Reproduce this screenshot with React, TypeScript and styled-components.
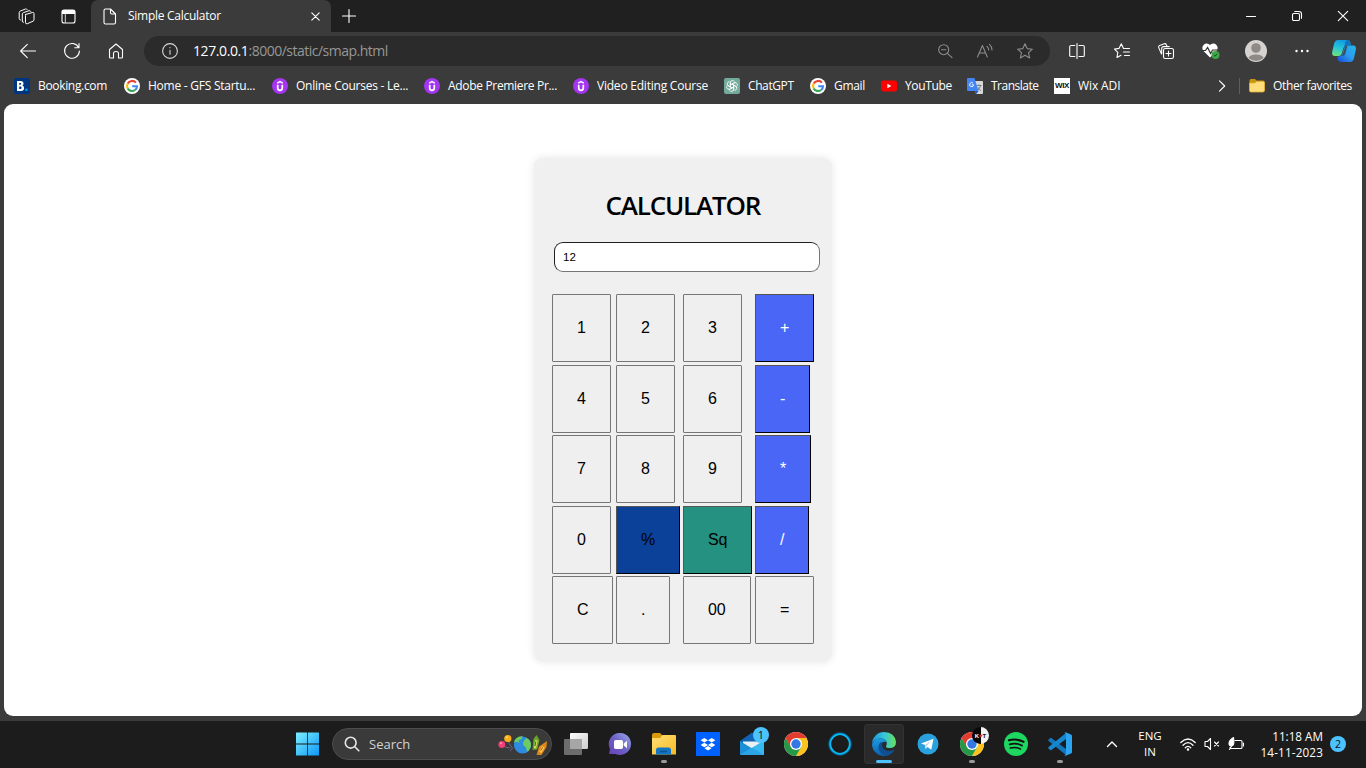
import React from "react";
import styled, { createGlobalStyle } from "styled-components";

const GlobalStyle = createGlobalStyle`
  * { box-sizing: border-box; }
  html, body { margin: 0; padding: 0; overflow: hidden; }
  body { background: #3b3b3b; font-family: "Open Sans", "Noto Sans", sans-serif; }
  svg { display: block; flex: none; overflow: visible; }
`;

const Screen = styled.div`
  width: 1366px;
  height: 768px;
  display: flex;
  flex-direction: column;
  background: #3b3b3b;
  color: #fff;
`;

const Label = styled.span<{ $size?: number; $track?: number; $color?: string }>`
  font-size: ${(p) => p.$size ?? 12}px;
  letter-spacing: ${(p) => p.$track ?? 0}px;
  color: ${(p) => p.$color ?? "#fff"};
  line-height: 16px;
  white-space: nowrap;
`;

const TitleBar = styled.header`
  height: 32px;
  display: flex;
  background: #202020;
`;

const TitleTools = styled.div`
  width: 91px;
  display: flex;
  align-items: center;
  gap: 26px;
  padding-left: 17.5px;
`;

const Tab = styled.div`
  width: 240px;
  display: flex;
  align-items: center;
  padding: 0 11px 0 12px;
  background: #3b3b3b;
  border-radius: 7px 7px 0 0;
`;

const TabTitle = styled(Label)`
  flex: 1;
  margin-left: 11px;
`;

const NewTab = styled.div`
  display: flex;
  align-items: center;
  padding-left: 10.5px;
`;

const WindowControls = styled.div`
  margin-left: auto;
  display: flex;
  align-items: center;
  gap: 36px;
  padding-right: 18px;
`;

const Toolbar = styled.div`
  height: 38px;
  display: flex;
  align-items: center;
`;

const NavButtons = styled.div`
  width: 144px;
  display: flex;
  align-items: center;
  gap: 28px;
  padding-left: 20px;
`;

const AddressBar = styled.div`
  width: 906px;
  height: 30px;
  display: flex;
  align-items: center;
  padding: 0 17px 0 18px;
  border-radius: 15px;
  background: #2b2b2b;
`;

const Url = styled.div`
  flex: 1;
  margin-left: 15px;
  display: flex;
`;

const AddressTools = styled.div`
  display: flex;
  align-items: center;
  gap: 23px;
`;

const ToolCell = styled.div<{ $w: number }>`
  width: ${(p) => p.$w}px;
  display: flex;
  justify-content: center;
`;

const Tools = styled.div`
  display: flex;
  align-items: center;
  padding-left: 5px;
`;

const BookmarkBar = styled.nav`
  height: 34px;
  display: flex;
  align-items: center;
  padding: 0 0 2px 14px;
`;

const Bookmark = styled.a<{ $w?: number }>`
  width: ${(p) => (p.$w ? `${p.$w}px` : "auto")};
  flex: none;
  display: flex;
  align-items: center;
  gap: 8px;
`;

const Divider = styled.i`
  width: 1px;
  height: 16px;
  background: #5e5e5e;
  margin: 0 9px 0 13px;
`;

const BookmarkEnd = styled.div`
  margin-left: auto;
  width: 148px;
  display: flex;
  align-items: center;
`;

const Page = styled.main`
  width: 1358px;
  height: 612px;
  margin: 0 4px 5px;
  padding-top: 53.5px;
  border-radius: 9px;
  background: #fff;
`;

const Card = styled.section`
  width: 298.5px;
  height: 504.5px;
  margin-left: 529.5px;
  display: flex;
  flex-direction: column;
  border-radius: 9px;
  background: #f0f0f0;
  box-shadow: 0 0 9px rgba(0, 0, 0, 0.1);
`;

const Heading = styled.h1`
  margin: 29.5px 0 0 72px;
  height: 37px;
  font: 600 26px/36px "Open Sans", "Noto Sans", sans-serif;
  letter-spacing: -1.2px;
  color: #000;
`;

const Display = styled.input`
  width: 266px;
  height: 30px;
  margin: 18px 0 22px 20.5px;
  padding: 0 8px;
  border: 1px solid;
  border-color: #202020 #767676 #767676 #202020;
  border-radius: 9px;
  background: #fff;
  color: #000;
  font: 11.5px/16px "Liberation Sans", Arial, sans-serif;
  outline: none;
`;

const Keypad = styled.div`
  display: grid;
  grid-template-columns: 64px 67px 72px 60px;
  grid-auto-rows: 68px;
  row-gap: 2.5px;
  justify-items: start;
  padding-left: 18.4px;
`;

type KeyTone = "plain" | "operator" | "percent" | "square";
const toneFill: Record<KeyTone, string> = {
  plain: "#efefef",
  operator: "#4a66f6",
  percent: "#0b4199",
  square: "#259180",
};

const Key = styled.button<{ $tone: KeyTone }>`
  height: 68px;
  padding: 0 24px;
  font: 16px/18px "Liberation Sans", Arial, sans-serif;
  border: 1px solid;
  border-color: ${(p) => (p.$tone === "plain" ? "#767676" : "#555 #000 #000 #555")};
  border-radius: ${(p) => (p.$tone === "plain" ? 1 : 0)}px;
  background: ${(p) => toneFill[p.$tone]};
  color: ${(p) => (p.$tone === "operator" ? "#fff" : "#000")};
`;

const Taskbar = styled.footer`
  height: 47px;
  display: flex;
  align-items: center;
  padding-bottom: 1px;
  background: #1c1c1c;
`;

const Launcher = styled.div`
  display: flex;
  align-items: center;
  padding-left: 296px;
`;

const SearchBox = styled.div`
  width: 220px;
  height: 32px;
  margin: 0 2px 0 12px;
  display: flex;
  align-items: center;
  padding: 0 3px 0 11px;
  border: 1px solid #4d4d4d;
  border-radius: 16px;
  background: #3a3a3a;
`;

const SearchLabel = styled(Label)`
  flex: 1;
  margin-left: 9px;
`;

const AppSlot = styled.div<{ $active?: boolean }>`
  position: relative;
  width: 40px;
  height: 40px;
  margin: 0 2px;
  display: flex;
  align-items: center;
  justify-content: center;
  border-radius: 4px;
  background: ${(p) => (p.$active ? "#2a2a2a" : "transparent")};
  box-shadow: ${(p) => (p.$active ? "inset 0 0 0 1px #333" : "none")};
`;

const RunMark = styled.i<{ $active?: boolean }>`
  position: absolute;
  bottom: 1px;
  left: 50%;
  transform: translateX(-50%);
  width: ${(p) => (p.$active ? 16 : 6)}px;
  height: 3px;
  border-radius: 2px;
  background: ${(p) => (p.$active ? "#4cc2ff" : "#9a9a9a")};
`;

const CountBadge = styled.span`
  position: absolute;
  top: 3px;
  right: 3px;
  width: 16px;
  height: 16px;
  border-radius: 50%;
  background: #4cc2ff;
  color: #111;
  font-size: 11px;
  line-height: 16px;
  text-align: center;
`;

const Tray = styled.div`
  margin-left: auto;
  display: flex;
  align-items: center;
`;

const Language = styled.div`
  width: 40px;
  margin-left: 13px;
  display: flex;
  flex-direction: column;
  align-items: center;
`;

const Status = styled.div`
  display: flex;
  align-items: center;
  gap: 8px;
  margin-left: 10px;
`;

const Clock = styled.div`
  width: 79px;
  display: flex;
  flex-direction: column;
  align-items: flex-end;
`;

const Notice = styled.span`
  width: 16px;
  height: 16px;
  margin: 0 20px 0 7px;
  border-radius: 50%;
  background: #4cc2ff;
  color: #111;
  font-size: 10.5px;
  line-height: 16px;
  text-align: center;
`;

const Glyph: React.FC<{ s?: number; w?: number; h?: number; c?: string; sw?: number; children: React.ReactNode }> = ({
  s = 16, w, h, c = "#fff", sw = 1.1, children,
}) => (
  <svg width={w ?? s} height={h ?? s} viewBox={`0 0 ${w ?? s} ${h ?? s}`} fill="none" stroke={c} strokeWidth={sw}
    strokeLinecap="round" strokeLinejoin="round">{children}</svg>
);

const WorkspacesIcon = () => (
  <Glyph w={17} h={17} sw={1}>
    <path d="m7.500 6.500 7-2q1.500-.3 1.500 1v6.300q0 1-1 1.400l-5.600 2.500q-1.900.6-1.900-1.200V7.500q0-.7 0-1" />
    <path d="M5.500 14.300q-1.200 0-1.200-1.200V6q0-1 1-1.300l5.700-2q1.200-.3 1.700.7" />
    <path d="M2.500 12q-1.300-.2-1.300-1.300V4.500q0-1 1-1.400L7.500 1q1.200-.4 1.700.5" />
  </Glyph>
);

const PanelIcon = () => (
  <Glyph w={15} h={15}>
    <rect x="1" y="1" width="13" height="13" rx="2" />
    <path d="M1.500 1.500h12v3h-12z" fill="#fff" />
    <path d="M4.300 5v8.500" strokeWidth=".8" />
  </Glyph>
);

const DocIcon = () => (
  <Glyph w={14} h={17}>
    <path d="M2.500 1h5l5 5v8.500q0 1.500-1.500 1.500H2.500Q1 16 1 14.500v-12Q1 1 2.500 1M7.500 1v3.800q0 1.200 1.200 1.200h3.800" />
  </Glyph>
);

const BookingIcon = () => (
  <svg width="16" height="16" viewBox="0 0 16 16">
    <rect width="16" height="16" rx="2" fill="#003580" />
    <path fillRule="evenodd" d="M3 3h3.800q2.700 0 2.700 2.500 0 1.400-1 2 1.600.6 1.600 2.500 0 3-3.100 3H3zM5.200 4.900v1.800h1q1 0 1-.9t-1-.9zM5.200 8.500v2.600h1.300q1.100 0 1.100-1.300T6.500 8.500z" fill="#fff" />
    <circle cx="12.400" cy="11.800" r="1.300" fill="#00a3e8" />
  </svg>
);

const GoogleIcon = () => (
  <svg width="16" height="16" viewBox="0 0 16 16" fill="none" strokeWidth="2.100">
    <circle cx="8" cy="8" r="8" fill="#fff" />
    <path d="M11.900 4.600A5 5 0 0 0 3.700 5.600" stroke="#ea4335" />
    <path d="M3.700 5.600a5 5 0 0 0 0 4.800" stroke="#fbbc05" />
    <path d="M3.700 10.400a5 5 0 0 0 7.400 1.600" stroke="#34a853" />
    <path d="M11.100 12A5 5 0 0 0 13 8.200H8.200" stroke="#4285f4" />
  </svg>
);

const UdemyIcon = () => (
  <svg width="16" height="16" viewBox="0 0 16 16" fill="none" stroke="#fff" strokeWidth="1.700">
    <circle cx="8" cy="8" r="8" fill="#a435f0" stroke="none" />
    <path d="M5.700 6.800v3.300q0 2.300 2.300 2.300t2.300-2.300V6.800" />
    <path d="M5.200 5.200 8 3.600l2.800 1.600" strokeWidth="1.400" />
  </svg>
);

const ChatIcon = () => (
  <svg width="16" height="16" viewBox="0 0 16 16" fill="none" stroke="#fff" strokeWidth=".75">
    <rect width="16" height="16" rx="2" fill="#74aa9c" stroke="none" />
    {[0, 60, 120, 180, 240, 300].map((a) => (
      <path key={a} transform={`rotate(${a} 8 8)`} d="M6.300 9V4.700a2.300 2.300 0 0 1 4.200-1.200M6.300 7 9.900 4.900a2.300 2.300 0 0 1 2 0" />
    ))}
  </svg>
);

const YouTubeIcon = () => (
  <svg width="16" height="16" viewBox="0 0 16 16">
    <rect y="2.500" width="16" height="11" rx="2.500" fill="#f00" />
    <path d="M6.400 5.700v4.600l4-2.300z" fill="#fff" />
  </svg>
);

const TranslateIcon = () => (
  <svg width="16" height="16" viewBox="0 0 16 16" fill="none">
    <path d="M6 3h9q1 0 1 1v11q0 1-1 1H9z" fill="#d8d8d8" />
    <path d="M9.500 7.500h5M12 6.300v1.200M13.700 7.500q-1 3.500-3.500 5M10.500 9q1.500 2.800 3.500 3.700" stroke="#687a8c" strokeWidth=".9" />
    <path d="M1 0h6.500l4 13H1q-1 0-1-1V1q0-1 1-1" fill="#4285f4" />
    <path d="m7.800 13 1.500 3 2.200-3z" fill="#2457bd" />
    <path d="M6 5.200a2 2 0 1 0 .6 1.600H4.700" stroke="#fff" strokeWidth=".9" />
  </svg>
);

const WixTile = styled.span`
  width: 16px;
  height: 16px;
  background: #fff;
  color: #111;
  font: 700 8px/16px "Liberation Sans", Arial, sans-serif;
  letter-spacing: -0.3px;
  text-align: center;
`;

const FolderIcon = () => (
  <svg width="16" height="16" viewBox="0 0 16 16">
    <path d="M.5 2.500q0-1.500 1.500-1.500h4l1.500 1.500H14q1.500 0 1.500 1.500v9H.5z" fill="#c8950f" />
    <path d="M.5 5h5.300l2-1.500H14q1.500 0 1.500 1v7.500q0 2-1.500 2H2q-1.500 0-1.500-1.500z" fill="#ffdc7c" stroke="#e0b030" strokeWidth=".8" />
  </svg>
);

const HeartIcon = () => (
  <svg width="18" height="16" viewBox="0 0 18 16" fill="none">
    <path d="M8 14.500 1.500 8A4 4 0 0 1 8 2a4 4 0 0 1 6.500 6z" fill="#fff" />
    <path d="M0 7.500h3.500L5.600 4.500l3 6 2-3.500H16" stroke="#333" strokeWidth="1.200" />
    <circle cx="13.500" cy="12" r="4" fill="#3fa648" />
    <path d="m11.700 12 1.300 1.300 2.400-2.600" stroke="#174c1b" />
  </svg>
);

const AvatarIcon = () => (
  <svg width="22" height="22" viewBox="0 0 22 22">
    <circle cx="11" cy="11" r="11" fill="#d5d2cf" />
    <circle cx="11" cy="8" r="4.800" fill="#8f8a86" />
    <path d="M3.500 18q1-3.500 7.500-3.500t7.500 3.500A11 11 0 0 1 3.500 18" fill="#8f8a86" />
  </svg>
);

const CopilotIcon = () => (
  <svg width="24" height="22" viewBox="0 0 24 22">
    <defs>
      <linearGradient id="cpA" x1=".5" y1="0" x2=".2" y2="1"><stop stopColor="#0f9be0" /><stop offset=".5" stopColor="#26c6d8" /><stop offset="1" stopColor="#6ee37b" /></linearGradient>
      <linearGradient id="cpB" x1="1" y1="0" x2="0" y2="1"><stop stopColor="#25b8e8" /><stop offset=".5" stopColor="#2b9bf0" /><stop offset="1" stopColor="#1747d8" /></linearGradient>
    </defs>
    <path d="M6 0h9q3 0 3.500 3l.5 2.500h-4.500q-2.500 0-3.200 2.700l-1.500 5.300q-.8 2.500-3.300 2.500H3q-3.500 0-2.800-4L2 4Q3 0 6 0" fill="url(#cpA)" />
    <path d="M18 22H9q-3 0-3.300-3L5.300 16.500q4.200.5 5-2.200l1.700-6q.7-2.800 3.700-2.800H21q3.500 0 2.900 4L22 18q-1 4-4 4" fill="url(#cpB)" />
    <path d="M14.500 0q2.500 0 3.500 3l.9 2.500h-4q-2 0-3 2.700L13 3z" fill="#1161b9" opacity=".75" />
    <path d="M13 7.300q.8-1.800 2.500-1.800l-2.200 8q-.8 2.500-3 2.500z" fill="#3b3b3b" opacity=".8" />
  </svg>
);

const WindowsIcon = () => (
  <svg width="24" height="24" viewBox="0 0 24 24">
    <defs><linearGradient id="win" gradientUnits="userSpaceOnUse" x1="0" y1="0" x2="24" y2="24"><stop stopColor="#7df1ff" /><stop offset="1" stopColor="#0a93f5" /></linearGradient></defs>
    <path d="M0 1q0-.5.5-.5h10.700v11H0zM12 .5h10.500q.5 0 .5.500v10.500H12zM0 12.500h11.200v11H.5q-.5 0-.5-.5zM12 12.500h11V23q0 .5-.5.5H12z" fill="url(#win)" />
  </svg>
);

const SearchArt = () => (
  <svg width="50" height="24" viewBox="0 0 50 24" fill="none">
    <path d="M4 13q4 3 8 3M11 8q-1 4 2 6t-1 5" stroke="#77618e" />
    <circle cx="3.800" cy="12.500" r="3.400" fill="#f23d78" /><circle cx="3" cy="11.300" r="1" fill="#ff93b0" />
    <circle cx="9.800" cy="6.500" r="3.600" fill="#fbae18" /><circle cx="9" cy="5.200" r="1" fill="#ffdb72" />
    <circle cx="24.500" cy="13" r="8.600" fill="#2d8ce0" />
    <path d="M18 6.500q3-2.800 6.500-2.200l-1 3-3 1 1 2.500-3-1-2.500 1q0-2.500 2-4.300M25 10.500l3-4.500 3 1.500q2.500 3 2 7l-2.500 4.500-1.500.5-1-4-2.500-2z" fill="#6dcc5d" />
    <path d="m34.500 18 1-11L38.500 3l3 5-2.300 9.500z" fill="#69a52c" /><path d="m36 16 1.200-8 2.500.5-1.700 8z" fill="#d5dc59" /><path d="m37 14 .8-4.500" stroke="#37702a" />
    <path d="m38.500 23 2.500-8.500L49 9l-.5 6-5 8z" fill="#db8617" /><path d="m41 19.500 3-5.500 2.700 1.600-3.500 5.600z" fill="#ffc44e" /><path d="m42.500 18.700 2.300-3.500" stroke="#a75b0a" />
  </svg>
);

const TaskViewIcon = () => (
  <svg width="24" height="24" viewBox="0 0 24 24">
    <defs><linearGradient id="tv" x1="0" y1="0" x2="1" y2="1"><stop stopColor="#fff" /><stop offset="1" stopColor="#ccc" /></linearGradient></defs>
    <rect x="6" y="1" width="18" height="16" rx="1" fill="url(#tv)" />
    <rect x="0" y="7" width="18" height="16" rx="1" fill="#6d6d6d" />
    <path d="M6 7h12v10H6z" fill="#a6a6a6" />
  </svg>
);

const MeetIcon = () => (
  <svg width="24" height="24" viewBox="0 0 24 24">
    <defs><linearGradient id="meet" x1="0" y1="1" x2="1" y2="0"><stop stopColor="#693fb5" /><stop offset=".5" stopColor="#6c62c8" /><stop offset="1" stopColor="#9caeea" /></linearGradient></defs>
    <path d="M12.500 1a11 11 0 1 1-5 21H1l1-5A11 11 0 0 1 12.500 1" fill="url(#meet)" />
    <rect x="6" y="8" width="9" height="9" rx="1.700" fill="#fff" /><path d="m15.700 11.500 3.300-2.700v7.500l-3.300-2.700z" fill="#fff" />
  </svg>
);

const ExplorerIcon = () => (
  <svg width="24" height="22" viewBox="0 0 24 22">
    <defs><linearGradient id="fx" x1="0" y1="0" x2="1" y2="1"><stop stopColor="#ffe078" /><stop offset="1" stopColor="#f8b923" /></linearGradient></defs>
    <path d="M0 2q0-2 2-2h6l2 2v5H0z" fill="#d99b08" />
    <path d="M0 5h8l2.500-3H23q1 0 1 1v18.500H0z" fill="url(#fx)" />
    <path d="M4 21.500V17q0-2.500 2.500-2.500h10q2.500 0 2.500 2.500v4.500z" fill="#1276c4" /><path d="M8 18.500h7" stroke="#0b5491" strokeWidth="1.500" />
  </svg>
);

const DropboxIcon = () => (
  <svg width="24" height="24" viewBox="0 0 24 24">
    <rect width="24" height="24" fill="#0061fe" />
    <path d="m8.300 6 3.700 2.300-3.700 2.300-3.700-2.300zM15.700 6l3.700 2.300-3.700 2.300L12 8.300zM8.300 10.700l3.700 2.300-3.700 2.300L4.600 13zM15.700 10.700l3.700 2.300-3.700 2.300L12 13zM12 14l3.600 2.300-3.600 2.300-3.600-2.300z" fill="#fff" />
  </svg>
);

const MailIcon = () => (
  <svg width="24" height="24" viewBox="0 0 24 24">
    <path d="m0 9 12-8.500L24 9v6H0z" fill="#1064b5" />
    <path d="M3 9.500h18V15l-9 3-9-3z" fill="#e9f0f6" />
    <path d="M0 9l13 8L0 23z" fill="#1b8fd8" /><path d="M24 8.500V23H0z" fill="#36b9f0" /><path d="M24 23H0l12-7.300z" fill="#2ba5e6" />
  </svg>
);

const ChromeIcon = () => (
  <svg width="24" height="24" viewBox="0 0 24 24">
    <circle cx="12" cy="12" r="12" fill="#fff" />
    <path d="M22.400 6A12 12 0 0 1 12 24l5.200-9L12 6z" fill="#fcc31e" />
    <path d="M1.600 6A12 12 0 0 0 12 24l5.200-9h-10z" fill="#279847" />
    <path d="M1.600 6 6.800 15 12 12 12 6h10.400A12 12 0 0 0 1.600 6" fill="#e33b2e" />
    <circle cx="12" cy="12" r="6" fill="#fff" /><circle cx="12" cy="12" r="4.700" fill="#3478e5" />
  </svg>
);

const CortanaIcon = () => (
  <svg width="24" height="24" viewBox="0 0 24 24" fill="none">
    <circle cx="12" cy="12" r="10.500" stroke="#07567c" strokeWidth="2.500" /><circle cx="12" cy="12" r="9.800" stroke="#09baf5" strokeWidth="1.800" />
  </svg>
);

const EdgeIcon = () => (
  <svg width="24" height="24" viewBox="0 0 24 24">
    <defs>
      <linearGradient id="egA" x1="0" y1=".4" x2="1" y2=".4"><stop stopColor="#1b96d8" /><stop offset=".5" stopColor="#33c5dd" /><stop offset="1" stopColor="#68e15a" /></linearGradient>
      <linearGradient id="egB" x1="0" y1="0" x2="0" y2="1"><stop stopColor="#1b9de2" /><stop offset="1" stopColor="#0c5eae" /></linearGradient>
    </defs>
    <path d="M0 11A12 12 0 0 1 12 0q11 .5 12 10 0 6-6.500 6-4 0-3.500-2 1-1.500.8-3.500Q13.500 6.500 9 6.500q-6 0-9 4.500" fill="url(#egA)" />
    <path d="M0 12Q2 6.500 8.500 6.500q5 0 6.300 4-1.800-1.300-4-.3Q8 12 8.500 15.500q.8 4.500 6 6.300 1 .3 3-.2Q15.500 24 12 24A12 12 0 0 1 0 12" fill="url(#egB)" />
    <path d="M8.500 10.500q-3 3-1.500 7.500 1.700 4.500 6.500 5.800 5.500-.3 9-5.600.3-.7-.5-.4-5 2.400-8.700.2-4.500-2.800-2.500-7.500-1.500-.5-2.300 0" fill="#104f91" />
  </svg>
);

const TelegramIcon = () => (
  <svg width="22" height="22" viewBox="0 0 22 22">
    <circle cx="11" cy="11" r="10.500" fill="#2aa1dc" />
    <path d="m4 10.500 12.500-4.800-2.200 11-3.800-2.600-2 2-.5-4.200z" fill="#fff" /><path d="m8 12 6.500-4.500-4.800 5.500-.8 2.500z" fill="#b7d8ea" />
  </svg>
);

const ProfileMark = styled.span`
  position: absolute;
  top: 3px;
  left: 20px;
  width: 17px;
  height: 17px;
  display: flex;
  align-items: center;
  justify-content: center;
  border-radius: 50%;
  background: linear-gradient(90deg, #080808 50%, #f3f3f3 50%);
  font: 700 6px/8px "Liberation Sans", Arial, sans-serif;
`;

const MarkLetter = styled.b<{ $c: string }>`
  color: ${(p) => p.$c};
`;

const SpotifyIcon = () => (
  <svg width="24" height="24" viewBox="0 0 24 24" fill="none" stroke="#111" strokeLinecap="round">
    <circle cx="12" cy="12" r="12" fill="#1ed760" stroke="none" />
    <path d="M5 8.300q7.500-2.200 14.500 1.500" strokeWidth="2.200" /><path d="M5.700 12.300q6.500-1.900 12.300 1.300" strokeWidth="1.800" /><path d="M6.300 16q5.500-1.500 10.200 1.100" strokeWidth="1.500" />
  </svg>
);

const CodeIcon = () => (
  <svg width="24" height="24" viewBox="0 0 24 24">
    <path d="M.5 7.500 2.200 6q.6-.4 1.200 0L18 17v6L.6 9q-.8-.8-.1-1.500" fill="#1277bd" />
    <path d="m.5 16.500 1.700 1.500q.6.400 1.200 0L18 7V1L.6 15q-.8.800-.1 1.500" fill="#1687cf" />
    <path d="M17.500.2 23 2.500q1 .5 1 1.500v16q0 1-1 1.500l-5.500 2.300q-.8 0-1-.3L18 22V2L16.500.5z" fill="#29a5f2" />
  </svg>
);

const bookmarks: { icon: React.ReactNode; text: string; w: number; track: number }[] = [
  { icon: <BookingIcon />, text: "Booking.com", w: 110, track: -0.33 },
  { icon: <GoogleIcon />, text: "Home - GFS Startu...", w: 148, track: -0.25 },
  { icon: <UdemyIcon />, text: "Online Courses - Le...", w: 152, track: -0.25 },
  { icon: <UdemyIcon />, text: "Adobe Premiere Pr...", w: 149, track: -0.32 },
  { icon: <UdemyIcon />, text: "Video Editing Course", w: 151, track: -0.22 },
  { icon: <ChatIcon />, text: "ChatGPT", w: 86, track: -0.4 },
  { icon: <GoogleIcon />, text: "Gmail", w: 71, track: -0.3 },
  { icon: <YouTubeIcon />, text: "YouTube", w: 86, track: -0.35 },
  { icon: <TranslateIcon />, text: "Translate", w: 87, track: -0.5 },
  { icon: <WixTile>WIX</WixTile>, text: "Wix ADI", w: 80, track: -0.1 },
];

const keys: [string, KeyTone][] = [
  ["1", "plain"], ["2", "plain"], ["3", "plain"], ["+", "operator"],
  ["4", "plain"], ["5", "plain"], ["6", "plain"], ["-", "operator"],
  ["7", "plain"], ["8", "plain"], ["9", "plain"], ["*", "operator"],
  ["0", "plain"], ["%", "percent"], ["Sq", "square"], ["/", "operator"],
  ["C", "plain"], [".", "plain"], ["00", "plain"], ["=", "plain"],
];

const apps: { icon: React.ReactNode; active?: boolean; running?: boolean; extra?: React.ReactNode }[] = [
  { icon: <TaskViewIcon /> },
  { icon: <MeetIcon /> },
  { icon: <ExplorerIcon />, running: true },
  { icon: <DropboxIcon /> },
  { icon: <MailIcon />, extra: <CountBadge>1</CountBadge> },
  { icon: <ChromeIcon /> },
  { icon: <CortanaIcon /> },
  { icon: <EdgeIcon />, active: true, running: true },
  { icon: <TelegramIcon /> },
  {
    icon: <ChromeIcon />, running: true,
    extra: <ProfileMark><MarkLetter $c="#fff">K</MarkLetter><MarkLetter $c="#e22">♥</MarkLetter><MarkLetter $c="#111">T</MarkLetter></ProfileMark>,
  },
  { icon: <SpotifyIcon /> },
  { icon: <CodeIcon />, running: true },
];

export default function App() {
  return (
    <Screen>
      <GlobalStyle />
      <TitleBar>
        <TitleTools><WorkspacesIcon /><PanelIcon /></TitleTools>
        <Tab>
          <DocIcon />
          <TabTitle $track={-0.27}>Simple Calculator</TabTitle>
          <Glyph s={9}><path d="m.8.8 7.400 7.400m0-7.400L.8 8.200" /></Glyph>
        </Tab>
        <NewTab><Glyph s={14}><path d="M7 .5v13M.5 7h13" /></Glyph></NewTab>
        <WindowControls>
          <Glyph s={10}><path d="M.5 5.500h9" /></Glyph>
          <Glyph s={10}><rect x=".5" y="2.500" width="7" height="7" rx="1.200" /><path d="M2.700.5H7Q9.500.5 9.500 3v4.300" /></Glyph>
          <Glyph s={10}><path d="m.3.3 9.400 9.400m0-9.400L.3 9.700" /></Glyph>
        </WindowControls>
      </TitleBar>

      <Toolbar>
        <NavButtons>
          <Glyph><path d="M15.500 8H.8M7.300 1.300.6 8l6.700 6.700" /></Glyph>
          <Glyph><path d="M14.600 4.500A7.400 7.400 0 1 0 15.400 8M15 .6v4.200h-4.200" /></Glyph>
          <Glyph><path d="M1.500 6.500 8 1l6.500 5.500V14q0 1-1 1h-3V10.500Q10.500 8.500 8 8.500t-2.500 2V15h-3q-1 0-1-1z" /></Glyph>
        </NavButtons>
        <AddressBar>
          <Glyph c="#d8d8d8"><circle cx="8" cy="8" r="7.400" /><path d="M8 7.300v4M8 4.600v.2" /></Glyph>
          <Url>
            <Label $size={14} $track={-0.4}>127.0.0.1</Label>
            <Label $size={14} $track={-0.5} $color="#979797">:8000/static/smap.html</Label>
          </Url>
          <AddressTools>
            <Glyph c="#8c8c8c"><circle cx="6.700" cy="6.700" r="5" /><path d="m10.400 10.400 4.600 4.300M4.500 6.700h4.400" /></Glyph>
            <Glyph w={18} h={16} c="#8c8c8c"><path d="M1.500 14 6.400 2.500 11.300 14M3.200 10h6.400M11 3.300q1.700 1.400 1.700 3.700M13.500 1.300q2.500 2.200 2.500 5.700" /></Glyph>
            <Glyph c="#8c8c8c"><path d="m8 .8 2.200 4.800 5.200.6-3.900 3.500 1.100 5.200L8 12.300l-4.600 2.600 1.100-5.200L.6 6.200l5.200-.6z" /></Glyph>
          </AddressTools>
        </AddressBar>
        <Tools>
          <ToolCell $w={44}><Glyph><path d="M5.800 2.500H2Q.7 2.500.7 3.800v8.400q0 1.300 1.300 1.300h3.800M10 2.500h4q1.300 0 1.300 1.300v8.400q0 1.300-1.300 1.300h-4M8 .5v15" /></Glyph></ToolCell>
          <ToolCell $w={45}><Glyph><path d="M9.500 5.500 7.300.8 5 5.400l-4.500.7 3.300 3.200L3 14.500l4-2.200M10.500 5.500h5M9.500 9h6M10.500 12.500h5" /></Glyph></ToolCell>
          <ToolCell $w={44}><Glyph><rect x="5.500" y="5.500" width="10" height="10" rx="1.800" /><path d="M10.500 8v5M8 10.500h5M3.500 11 .7 4.600Q.2 3.300 1.500 2.600L6.300.7q1.500-.4 2 1L9 3.300M3.700 10.500V5.600q0-2 2-2h5.600" /></Glyph></ToolCell>
          <ToolCell $w={45}><HeartIcon /></ToolCell>
          <ToolCell $w={45}><AvatarIcon /></ToolCell>
          <ToolCell $w={47}><svg width="14" height="4" viewBox="0 0 14 4" fill="#fff"><circle cx="1.500" cy="2" r="1.200" /><circle cx="7" cy="2" r="1.200" /><circle cx="12.500" cy="2" r="1.200" /></svg></ToolCell>
          <ToolCell $w={38}><CopilotIcon /></ToolCell>
        </Tools>
      </Toolbar>

      <BookmarkBar>
        {bookmarks.map((b) => (
          <Bookmark key={b.text} $w={b.w}>{b.icon}<Label $track={b.track}>{b.text}</Label></Bookmark>
        ))}
        <BookmarkEnd>
          <Glyph w={8} h={12}><path d="M1.500.8 6.700 6l-5.200 5.200" /></Glyph>
          <Divider />
          <Bookmark><FolderIcon /><Label $track={-0.36}>Other favorites</Label></Bookmark>
        </BookmarkEnd>
      </BookmarkBar>

      <Page>
        <Card>
          <Heading>CALCULATOR</Heading>
          <Display type="text" defaultValue="12" />
          <Keypad>
            {keys.map(([text, tone]) => <Key key={text} $tone={tone}>{text}</Key>)}
          </Keypad>
        </Card>
      </Page>

      <Taskbar>
        <Launcher>
          <WindowsIcon />
          <SearchBox>
            <Glyph c="#e8e8e8" sw={1.600}><circle cx="6.700" cy="6.700" r="5.400" /><path d="m10.800 10.800 4 4" /></Glyph>
            <SearchLabel $size={13} $color="#d2d2d2">Search</SearchLabel>
            <SearchArt />
          </SearchBox>
          {apps.map((a, i) => (
            <AppSlot key={i} $active={a.active}>
              {a.icon}{a.extra}{a.running && <RunMark $active={a.active} />}
            </AppSlot>
          ))}
        </Launcher>
        <Tray>
          <Glyph w={10} h={6} sw={1.400}><path d="M.5 5.500 5 1l4.500 4.500" /></Glyph>
          <Language><Label $size={11.500}>ENG</Label><Label $size={11.500}>IN</Label></Language>
          <Status>
            <Glyph w={16} h={13} sw={1.300}><path d="M.8 4.500q7.200-7 14.400 0M3 7.200q5-5 10 0M5.300 9.700q2.700-2.600 5.400 0" /><circle cx="8" cy="11.500" r=".6" fill="#fff" /></Glyph>
            <Glyph w={16} h={14}><path d="M6.500 1.500v11L3.500 9.500H1v-5h2.500zM10.500 5l4 4m0-4-4 4" /></Glyph>
            <Glyph w={16} h={14}><path d="M7 3.500h6q1 0 1 1v6q0 1-1 1H3q-1 0-1-1M15.500 6v3M1.500 12.500 3.500 9" /><path d="M5.500.5Q1 3 1 6.500q0 2.500 2.500 2.500Q7 8.500 5.500.5" fill="#fff" /></Glyph>
          </Status>
          <Clock><Label $size={11.700} $track={0}>11:18 AM</Label><Label $size={11.700} $track={0.15}>14-11-2023</Label></Clock>
          <Notice>2</Notice>
        </Tray>
      </Taskbar>
    </Screen>
  );
}
